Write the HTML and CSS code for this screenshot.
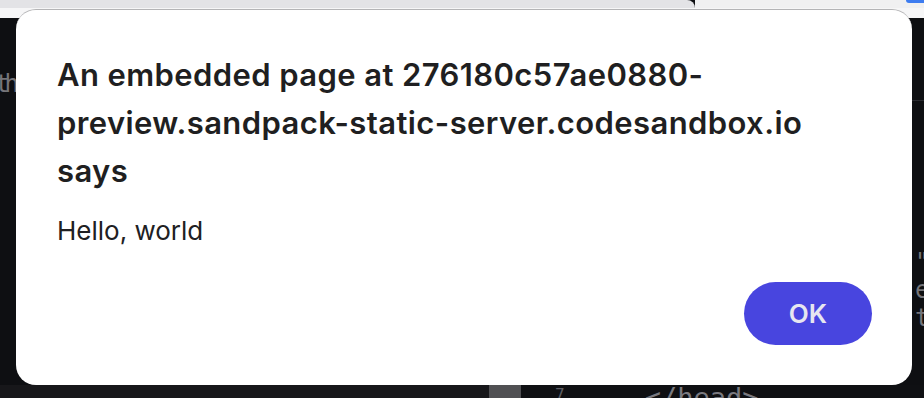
FILE: index.html
```html
<!DOCTYPE html>
<html lang="en">
<head>
<meta charset="utf-8">
<title>Alert</title>
<link rel="stylesheet" href="styles.css">
</head>
<body>
<div class="page">
  <div class="tabs">
    <div class="tab-strip tab-strip--dim"></div>
    <div class="tab-strip tab-strip--light"><span class="tab-dot"></span></div>
  </div>
  <div class="toolbar"></div>
  <div class="workspace">
    <div class="gutter gutter--left">
      <div class="code-line code-line--cut">th</div>
    </div>
    <div class="center"></div>
    <div class="gutter gutter--right">
      <div class="rule"></div>
      <div class="peek">
        <div class="code-line">"</div>
        <div class="code-line">e</div>
        <div class="code-line">t</div>
      </div>
    </div>
  </div>
  <div class="status">
    <div class="status-left"></div>
    <div class="status-scroll"></div>
    <div class="status-code">
      <span class="line-no">7</span>
      <span class="code-text">&lt;/head&gt;</span>
    </div>
  </div>

  <div class="dialog" role="alertdialog">
    <h1 class="dialog-title">An embedded page at 276180c57ae0880-preview.sandpack-static-server.codesandbox.io says</h1>
    <p class="dialog-message">Hello, world</p>
    <div class="dialog-actions">
      <button class="btn-ok" type="button">OK</button>
    </div>
  </div>
</div>
</body>
</html>
```
FILE: styles.css
```css
* { box-sizing: border-box; }

html, body {
  margin: 0;
  padding: 0;
  background: #0e0f12;
}

.page {
  position: relative;
  width: 924px;
  height: 398px;
  overflow: hidden;
  display: flex;
  flex-direction: column;
  font-family: Inter, "Open Sans", sans-serif;
}

.tabs {
  height: 8px;
  display: flex;
}
.tab-strip--dim {
  width: 695px;
  background: #e3e3e6;
  border-top-right-radius: 8px;
}
.tab-strip--light {
  flex: 1;
  background: #f0f0f1;
  position: relative;
}
.tab-dot {
  position: absolute;
  right: 0;
  top: 0;
  width: 18px;
  height: 3px;
  background: #3d7cf0;
  border-bottom-left-radius: 6px;
}

.toolbar {
  height: 10px;
  background: #f6f6f7;
}

.workspace {
  flex: 1;
  display: flex;
  background: #0e0f12;
}
.gutter {
  overflow: hidden;
  font-family: "DejaVu Sans Mono", "Liberation Mono", monospace;
  font-size: 24px;
  color: #75757a;
}
.gutter--left {
  width: 16px;
  padding-top: 52px;
}
.code-line {
  height: 28px;
  line-height: 28px;
  white-space: nowrap;
}
.code-line--cut {
  margin-left: -5px;
  letter-spacing: -5px;
}
.center { flex: 1; }
.gutter--right {
  width: 12px;
  padding-left: 3px;
}
.rule {
  height: 1px;
  margin-left: -3px;
  margin-top: 82px;
  background: #2a2b30;
}
.peek { margin-top: 147px; }

.status {
  height: 13px;
  display: flex;
  overflow: hidden;
}
.status-left {
  width: 489px;
  background: #17171a;
}
.status-scroll {
  width: 32px;
  background: #505053;
}
.status-code {
  flex: 1;
  background: #0f1013;
  font-family: "DejaVu Sans Mono", "Liberation Mono", monospace;
  color: #7a7a80;
  white-space: nowrap;
  display: flex;
  align-items: flex-start;
  padding-top: 2px;
}
.line-no {
  margin-left: 34px;
  font-size: 16px;
  line-height: 16px;
  color: #5d5d63;
}
.code-text {
  margin-left: 80px;
  font-size: 27px;
  line-height: 22px;
}

.dialog {
  position: absolute;
  left: 16px;
  top: 9px;
  width: 896px;
  height: 376px;
  background: #ffffff;
  border-top: 1px solid #b4b4b6;
  border-radius: 20px;
  padding: 41px 40px 40px 41px;
  display: flex;
  flex-direction: column;
}
.dialog-title {
  margin: 0;
  font-size: 31px;
  font-weight: 600;
  letter-spacing: 0.4px;
  line-height: 48px;
  color: #1f1f21;
  width: 800px;
}
.dialog-message {
  margin: 20px 0 0;
  font-size: 26px;
  line-height: 32px;
  font-weight: 400;
  color: #202022;
}
.dialog-actions {
  margin-top: auto;
  display: flex;
  justify-content: flex-end;
}
.btn-ok {
  width: 128px;
  height: 63px;
  border: none;
  border-radius: 32px;
  background: #4845df;
  color: #e6e6f0;
  font-family: Inter, "Open Sans", sans-serif;
  font-size: 26px;
  font-weight: 600;
  cursor: pointer;
}
```
